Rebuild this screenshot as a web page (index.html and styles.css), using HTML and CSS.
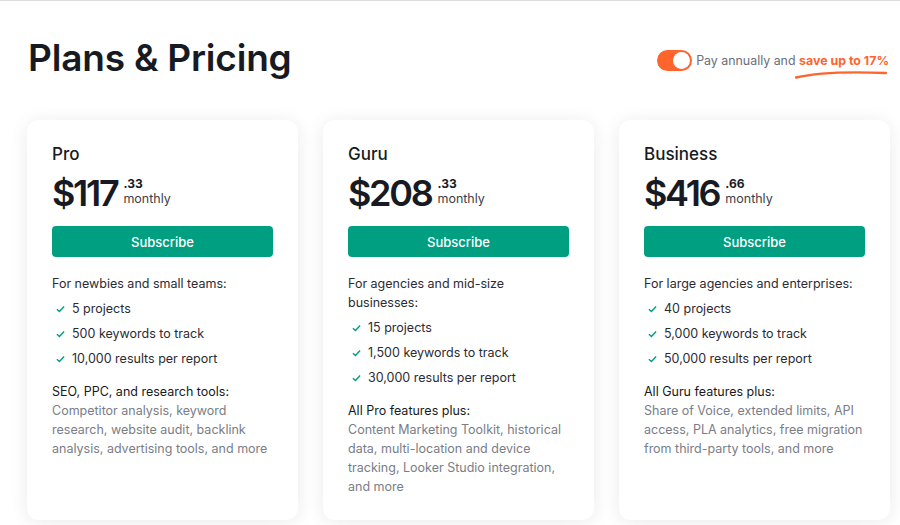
FILE: index.html
```html
<!DOCTYPE html>
<html>
<head>
<meta charset="utf-8">
<link rel="stylesheet" href="styles.css">
</head>
<body>
<div class="page">
  <header class="head">
    <h1 class="title">Plans &amp; Pricing</h1>
    <div class="billing">
      <span class="toggle"><span class="knob"></span></span>
      <span class="pay">Pay annually and <span class="save">save up to 17%<svg class="swoosh" viewBox="0 0 92 9" width="92" height="9"><path d="M1 7.5 C 20 3, 55 1.5, 91 3" stroke="#ff642d" stroke-width="2.4" fill="none" stroke-linecap="round"/></svg></span></span>
    </div>
  </header>

  <div class="cards">
    <section class="card">
      <h2 class="plan">Pro</h2>
      <div class="price"><span class="amount">$117</span><span class="meta"><b class="cents">.33</b><span class="per">monthly</span></span></div>
      <button class="btn">Subscribe</button>
      <p class="lead">For newbies and small teams:</p>
      <ul class="feats">
        <li><svg class="chk" viewBox="0 0 10 8" width="9" height="8"><path d="M1 4.2 L3.8 6.8 L9 1.2" stroke="#009f81" stroke-width="1.6" fill="none"/></svg>5 projects</li>
        <li><svg class="chk" viewBox="0 0 10 8" width="9" height="8"><path d="M1 4.2 L3.8 6.8 L9 1.2" stroke="#009f81" stroke-width="1.6" fill="none"/></svg>500 keywords to track</li>
        <li><svg class="chk" viewBox="0 0 10 8" width="9" height="8"><path d="M1 4.2 L3.8 6.8 L9 1.2" stroke="#009f81" stroke-width="1.6" fill="none"/></svg>10,000 results per report</li>
      </ul>
      <p class="sub">SEO, PPC, and research tools:</p>
      <p class="desc">Competitor analysis, keyword research, website audit, backlink analysis, advertising tools, and more</p>
    </section>

    <section class="card">
      <h2 class="plan">Guru</h2>
      <div class="price"><span class="amount">$208</span><span class="meta"><b class="cents">.33</b><span class="per">monthly</span></span></div>
      <button class="btn">Subscribe</button>
      <p class="lead">For agencies and mid-size businesses:</p>
      <ul class="feats">
        <li><svg class="chk" viewBox="0 0 10 8" width="9" height="8"><path d="M1 4.2 L3.8 6.8 L9 1.2" stroke="#009f81" stroke-width="1.6" fill="none"/></svg>15 projects</li>
        <li><svg class="chk" viewBox="0 0 10 8" width="9" height="8"><path d="M1 4.2 L3.8 6.8 L9 1.2" stroke="#009f81" stroke-width="1.6" fill="none"/></svg>1,500 keywords to track</li>
        <li><svg class="chk" viewBox="0 0 10 8" width="9" height="8"><path d="M1 4.2 L3.8 6.8 L9 1.2" stroke="#009f81" stroke-width="1.6" fill="none"/></svg>30,000 results per report</li>
      </ul>
      <p class="sub">All Pro features plus:</p>
      <p class="desc">Content Marketing Toolkit, historical data, multi-location and device tracking, Looker Studio integration, and more</p>
    </section>

    <section class="card">
      <h2 class="plan">Business</h2>
      <div class="price"><span class="amount">$416</span><span class="meta"><b class="cents">.66</b><span class="per">monthly</span></span></div>
      <button class="btn">Subscribe</button>
      <p class="lead">For large agencies and enterprises:</p>
      <ul class="feats">
        <li><svg class="chk" viewBox="0 0 10 8" width="9" height="8"><path d="M1 4.2 L3.8 6.8 L9 1.2" stroke="#009f81" stroke-width="1.6" fill="none"/></svg>40 projects</li>
        <li><svg class="chk" viewBox="0 0 10 8" width="9" height="8"><path d="M1 4.2 L3.8 6.8 L9 1.2" stroke="#009f81" stroke-width="1.6" fill="none"/></svg>5,000 keywords to track</li>
        <li><svg class="chk" viewBox="0 0 10 8" width="9" height="8"><path d="M1 4.2 L3.8 6.8 L9 1.2" stroke="#009f81" stroke-width="1.6" fill="none"/></svg>50,000 results per report</li>
      </ul>
      <p class="sub">All Guru features plus:</p>
      <p class="desc">Share of Voice, extended limits, API access, PLA analytics, free migration from third-party tools, and more</p>
    </section>
  </div>
</div>
</body>
</html>
```

FILE: styles.css
```css
* { box-sizing: border-box; }
html, body { margin: 0; padding: 0; }
body {
  width: 900px;
  height: 525px;
  overflow: hidden;
  background: #fff;
  font-family: Inter, "Noto Sans", sans-serif;
  color: #2b2c33;
  border-top: 1px solid #dcdcdc;
}
.page { padding: 0 10px 0 27px; }
.head {
  display: flex;
  align-items: flex-start;
  justify-content: space-between;
  height: 119px;
}
.title {
  margin: 33px 0 0 1px;
  font-size: 37px;
  font-weight: 600;
  letter-spacing: -0.2px;
  color: #171a22;
  line-height: 48px;
}
.billing {
  display: flex;
  align-items: center;
  margin-top: 49px;
  margin-right: 1px;
}
.toggle {
  width: 35px;
  height: 21px;
  border-radius: 11px;
  background: #ff642d;
  position: relative;
  margin-right: 4px;
}
.knob {
  position: absolute;
  right: 2px;
  top: 2px;
  width: 17px;
  height: 17px;
  border-radius: 50%;
  background: #fff;
}
.pay {
  font-size: 12.4px;
  color: #6c6e79;
}
.save {
  color: #ff642d;
  font-weight: 700;
  position: relative;
}
.swoosh {
  position: absolute;
  left: -4px;
  top: 17px;
}
.cards {
  display: grid;
  grid-template-columns: 271px 271px 271px;
  gap: 25px;
}
.card {
  background: #fff;
  border-radius: 12px;
  box-shadow: 0 2px 18px rgba(30, 35, 50, 0.09);
  padding: 24px 25px 20px;
  height: 400px;
}
.plan {
  margin: 0;
  font-size: 17px;
  font-weight: 500;
  color: #171a22;
  line-height: 20px;
}
.price {
  display: flex;
  align-items: flex-start;
  margin-top: 9px;
  height: 42px;
}
.amount {
  font-size: 36px;
  font-weight: 600;
  letter-spacing: -2.3px;
  line-height: 40px;
  color: #171a22;
}
.meta {
  display: flex;
  flex-direction: column;
  margin-left: 6px;
  margin-top: 4px;
}
.cents {
  font-size: 12px;
  font-weight: 700;
  line-height: 13px;
  color: #171a22;
}
.per {
  font-size: 12.5px;
  line-height: 17px;
  color: #3d3f47;
}
.btn {
  display: block;
  width: 221px;
  height: 31px;
  margin-top: 11px;
  border: 0;
  border-radius: 4px;
  background: #009f81;
  color: #fff;
  font-family: Inter, "Noto Sans", sans-serif;
  font-size: 13px;
  font-weight: 500;
  padding: 0;
}
.lead {
  margin: 17px 0 0;
  font-size: 12.5px;
  line-height: 19px;
  color: #2b2c33;
}
.feats {
  list-style: none;
  margin: 3px 0 0;
  padding: 0;
}
.feats li {
  display: flex;
  align-items: center;
  height: 25px;
  font-size: 12.5px;
  color: #2b2c33;
}
.chk { margin: 0 7px 0 4px; }
.sub {
  margin: 11px 0 0;
  font-size: 12.5px;
  line-height: 19px;
  color: #171a22;
}
.desc {
  margin: 0;
  font-size: 12.5px;
  line-height: 19px;
  color: #7a7d86;
}
```
